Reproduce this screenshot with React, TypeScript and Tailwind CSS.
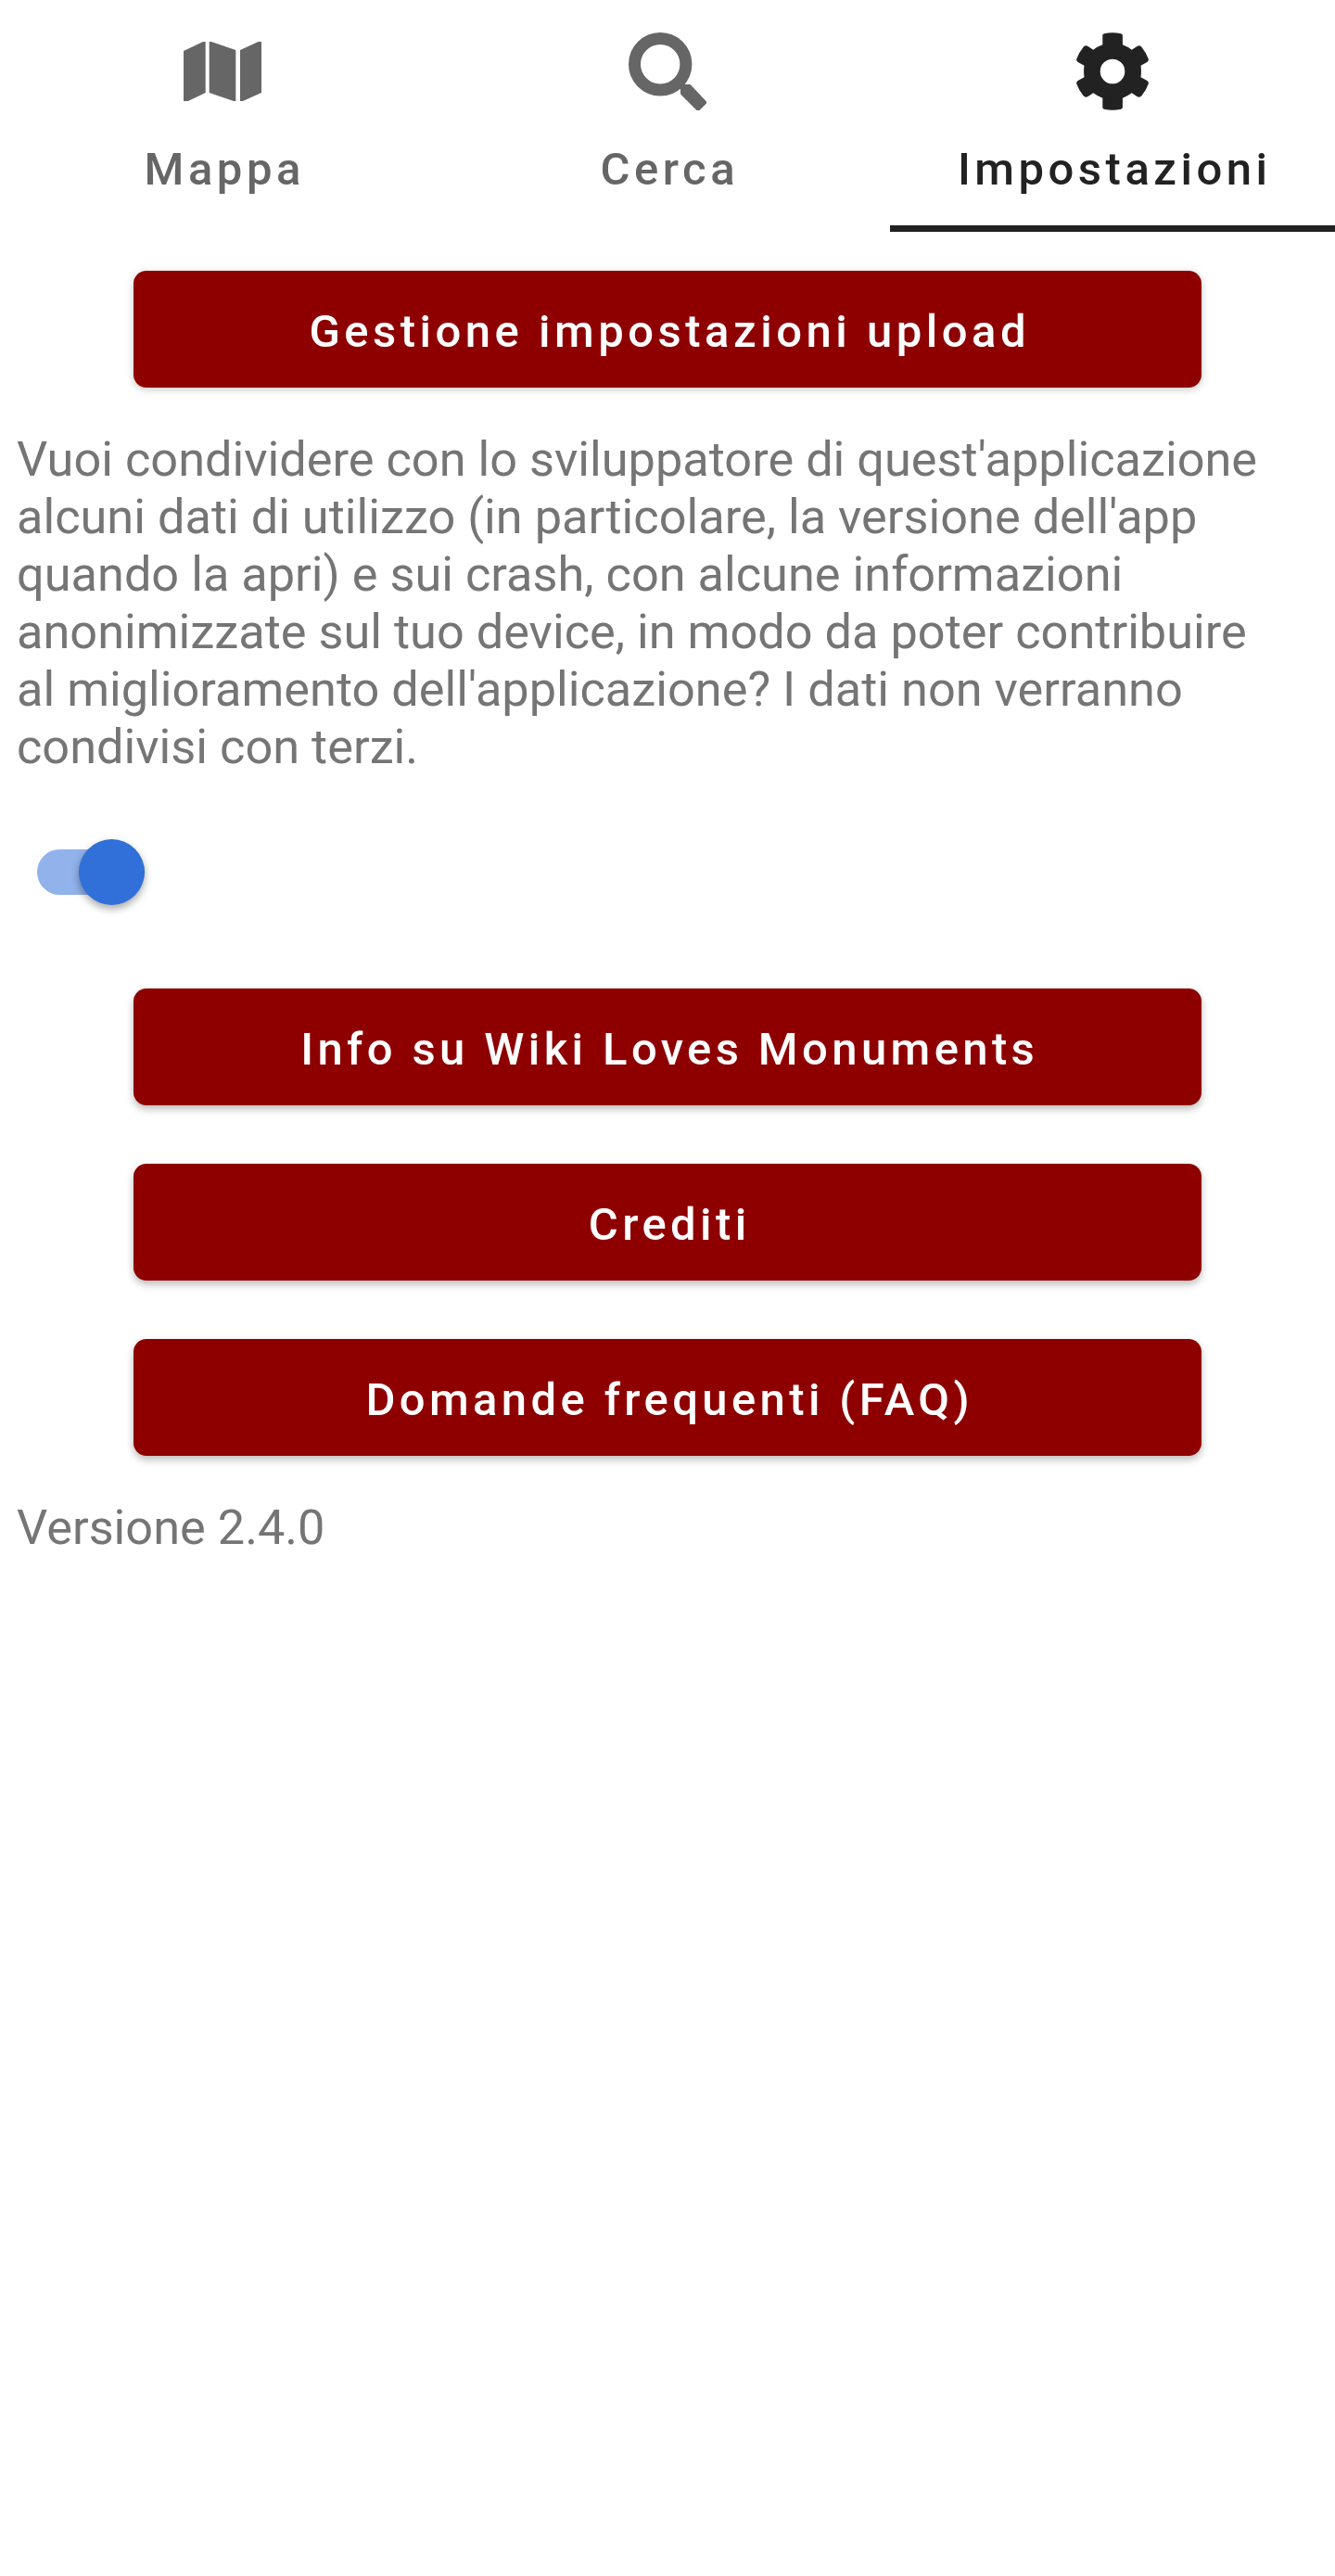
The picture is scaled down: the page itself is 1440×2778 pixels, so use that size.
const paragraph = [
  "Vuoi condividere con lo sviluppatore di quest'applicazione",
  "alcuni dati di utilizzo (in particolare, la versione dell'app",
  'quando la apri) e sui crash, con alcune informazioni',
  'anonimizzate sul tuo device, in modo da poter contribuire',
  "al miglioramento dell'applicazione? I dati non verranno",
  'condivisi con terzi.',
];

function MapIcon() {
  return (
    <svg className="size-[84px]" viewBox="0 0 84 84" fill="currentColor">
      <path d="M0 20 L21 10 H23.7 V65 L5 74 H0Z" />
      <path d="M27.7 10 H30 L56.3 19 V74 H54 L27.7 65Z" />
      <path d="M61 19 L80.500 10 H84 V65 L64 74 H61Z" />
    </svg>
  );
}

function SearchIcon() {
  return (
    <svg className="size-[84px]" viewBox="0 0 84 84" fill="currentColor">
      <circle cx="34.200" cy="34.200" r="27.700" fill="none" stroke="currentColor" strokeWidth="13" />
      <path d="M57 52 L61.500 56 H66.500 L84 74.500 V76.500 L76.500 84 H73.500 L56 66.500 V61.500 L52.500 57Z" />
    </svg>
  );
}

function GearIcon() {
  return (
    <svg className="size-[84px]" viewBox="0 0 84 84" fill="currentColor" fillRule="evenodd">
      <path d="M31.300 3.200 Q31.300 1.600 33 1.200 Q42 -0.900 51 1.200 Q52.900 1.600 52.900 3.200 V13.300 Q58.200 15.200 62.700 18.700 L68 15.200 Q71.300 13 73.400 15.700 Q78.200 21.500 80.700 28.600 Q81.300 30.800 79.300 32 L72.500 35.800 Q73.400 42 72.500 48.200 L79.300 52 Q81.300 53.200 80.700 55.400 Q78.200 62.500 73.400 68.300 Q71.300 71 68 68.800 L62.700 65.300 Q58.200 68.800 52.900 70.700 V80.800 Q52.900 82.400 51 82.800 Q42 84.900 33 82.800 Q31.300 82.400 31.300 80.800 V70.700 Q25.800 68.800 21.300 65.300 L16 68.800 Q12.700 71 10.600 68.300 Q5.800 62.500 3.300 55.400 Q2.700 53.200 4.700 52 L11.500 48.200 Q10.600 42 11.500 35.800 L4.700 32 Q2.700 30.800 3.300 28.600 Q5.800 21.500 10.600 15.700 Q12.700 13 16 15.200 L21.300 18.700 Q25.800 15.200 31.300 13.300Z M42 28.700 A13.300 13.300 0 1 0 42 55.300 A13.300 13.300 0 1 0 42 28.700Z" />
    </svg>
  );
}

const tabClass = 'flex flex-col items-center pt-[35px]';
const tabLabelClass = 'mt-[27px] pl-[4.5px] leading-[73px]';
const buttonClass =
  'flex h-[126px] w-[1152px] shrink-0 items-center justify-center rounded-[14px] bg-[#8e0000] pt-[5px] pl-[4.4px] text-[49px] leading-[73px] font-medium text-white';
const textClass = 'mt-[46px] w-full pl-[18px] text-[52.3px] leading-[62px] text-[#757575]';

export default function App() {
  return (
    <div className="flex h-[2778px] w-[1440px] flex-col bg-white font-[Roboto,sans-serif]">
      <nav className="grid h-[250px] grid-cols-3 text-[49px] font-medium tracking-[4.5px] text-[#666]">
        <div className={tabClass}>
          <MapIcon />
          <span className={tabLabelClass}>Mappa</span>
        </div>
        <div className={tabClass}>
          <SearchIcon />
          <span className={tabLabelClass}>Cerca</span>
        </div>
        <div className={`${tabClass} border-b-[7px] border-[#222] text-[#222]`}>
          <GearIcon />
          <span className={tabLabelClass}>Impostazioni</span>
        </div>
      </nav>
      <main className="flex flex-col items-center pt-[42px]">
        <button className={`${buttonClass} tracking-[4.5px] shadow-[0_2px_8px_rgba(0,0,0,0.22)]`}>
          Gestione impostazioni upload
        </button>
        <p className={textClass}>
          {paragraph.map((line) => (
            <span key={line} className="block whitespace-nowrap">{line}</span>
          ))}
        </p>
        <div className="mt-[69px] flex h-[71px] w-full items-center pl-10">
          <div className="flex h-[49px] w-[116px] items-center justify-end rounded-full bg-[#91b2eb]">
            <div className="size-[71px] shrink-0 rounded-full bg-[#3070d8] shadow-[0_4px_8px_rgba(0,0,0,0.35)]" />
          </div>
        </div>
        <div className="mt-[90px] flex flex-col gap-[63px] tracking-[4.38px]">
          {['Info su Wiki Loves Monuments', 'Crediti', 'Domande frequenti (FAQ)'].map((label) => (
            <button key={label} className={`${buttonClass} tracking-[4.38px] shadow-[0_4px_9px_rgba(0,0,0,0.27)]`}>
              {label}
            </button>
          ))}
        </div>
        <p className={textClass}>Versione 2.4.0</p>
      </main>
    </div>
  );
}
